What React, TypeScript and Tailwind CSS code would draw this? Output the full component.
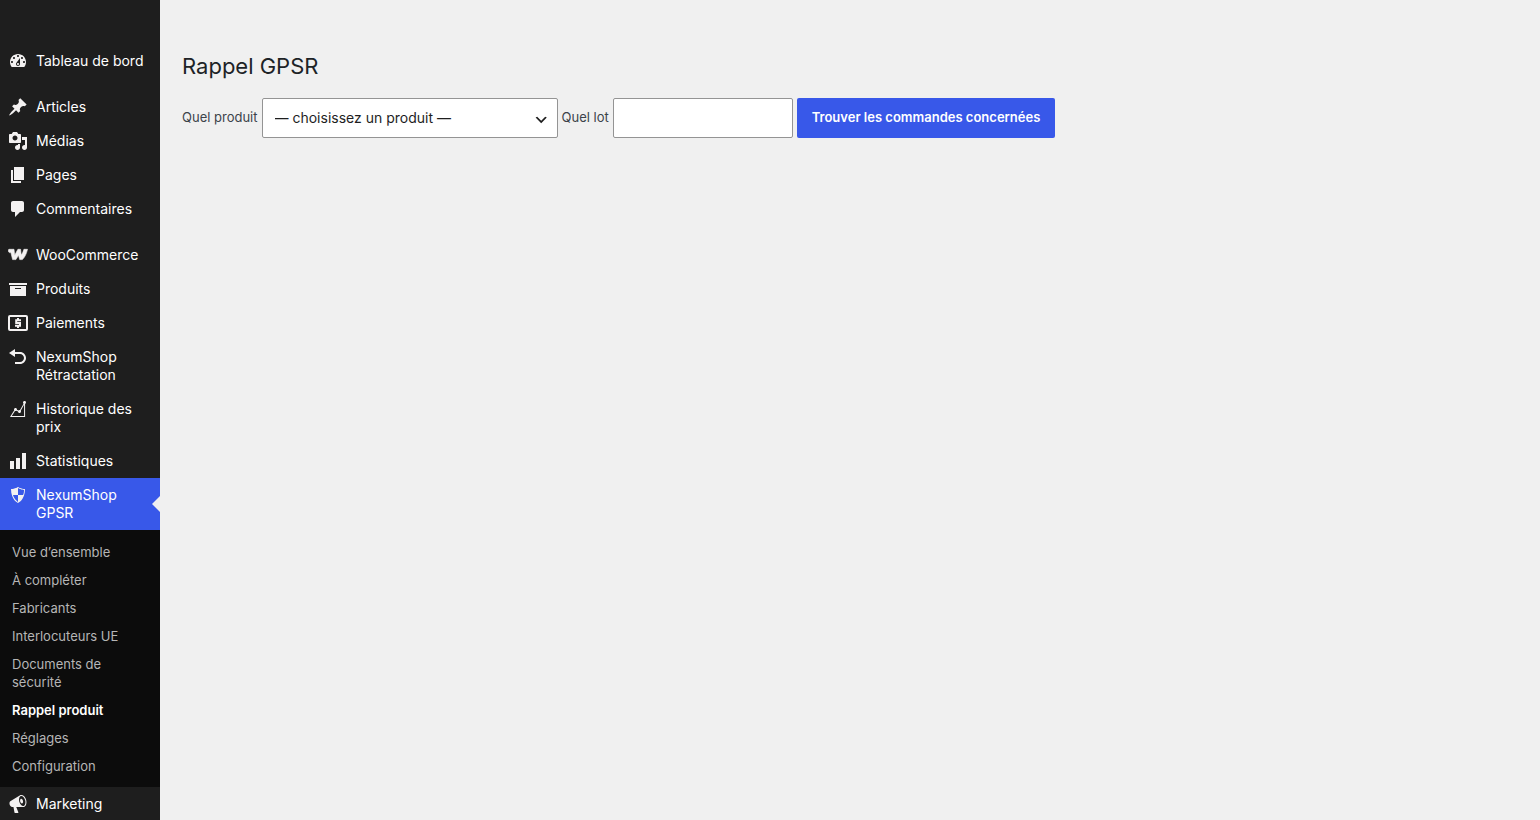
import type { ReactNode } from 'react';

const ICONS = {
  dashboard:
    'M3.76 16h12.48c1.1-1.37 1.76-3.11 1.76-5 0-4.42-3.58-8-8-8s-8 3.58-8 8c0 1.89.66 3.63 1.76 5zM10 4c.55 0 1 .45 1 1s-.45 1-1 1-1-.45-1-1 .45-1 1-1zM6 6c.55 0 1 .45 1 1s-.45 1-1 1-1-.45-1-1 .45-1 1-1zm8 0c.55 0 1 .45 1 1s-.45 1-1 1-1-.45-1-1 .45-1 1-1zm-5.37 5.55L12 7v6c0 1.1-.9 2-2 2s-2-.9-2-2c0-.57.24-1.08.63-1.45zM4 10c.55 0 1 .45 1 1s-.45 1-1 1-1-.45-1-1 .45-1 1-1zm12 0c.55 0 1 .45 1 1s-.45 1-1 1-1-.45-1-1 .45-1 1-1zm-5 3c0-.55-.45-1-1-1s-1 .45-1 1 .45 1 1 1 1-.45 1-1z',
  pin: 'M10.44 3.02l1.82-1.82 6.36 6.35-1.83 1.82c-1.05-.68-2.48-.57-3.41.36l-.75.75c-.92.93-1.04 2.35-.35 3.41l-1.83 1.82-2.41-2.41-2.8 2.79c-.42.42-3.38 2.71-3.8 2.29s1.86-3.39 2.28-3.81l2.79-2.79L4.1 9.36l1.83-1.82c1.05.69 2.48.57 3.4-.36l.75-.75c.93-.92 1.05-2.35.36-3.41z',
  media:
    'M13 11V4c0-.55-.45-1-1-1h-1.67L9 1H5L3.67 3H2c-.55 0-1 .45-1 1v7c0 .55.45 1 1 1h10c.55 0 1-.45 1-1zM7 4.5c1.38 0 2.5 1.12 2.5 2.5S8.38 9.5 7 9.5 4.5 8.38 4.5 7 5.62 4.5 7 4.5zM14 6h5v10.5c0 1.38-1.12 2.5-2.5 2.5S14 17.88 14 16.5s1.12-2.5 2.5-2.5c.17 0 .34.02.5.05V9h-3V6zm-4 8.05V13h2v3.5c0 1.38-1.12 2.5-2.5 2.5S7 17.88 7 16.5 8.12 14 9.5 14c.17 0 .34.02.5.05z',
  page: 'M6 15V2h10v13H6zm-1 1h8v2H3V5h2v11z',
  comment: 'M5 2h9c1.1 0 2 .9 2 2v7c0 1.1-.9 2-2 2h-2l-5 5v-5H5c-1.1 0-2-.9-2-2V4c0-1.1.9-2 2-2z',
  archive: 'M19 4v2H1V4h18zM2 7h16v10H2V7zm11 3V9H7v1h6z',
  undo: 'M12 5H7V2L1 6l6 4V7h5c2.2 0 4 1.8 4 4s-1.8 4-4 4H7v2h5c3.3 0 6-2.7 6-6s-2.7-6-6-6z',
  chartLine:
    'M18 3.5c0 .62-.38 1.16-.92 1.38v13.11H1.99l4.22-6.73c-.13-.23-.21-.48-.21-.76C6 9.67 6.67 9 7.5 9S9 9.67 9 10.5c0 .13-.02.25-.05.37l1.44.63c.27-.3.67-.5 1.11-.5.18 0 .35.04.51.09l3.58-6.41c-.36-.27-.59-.7-.59-1.18 0-.83.67-1.5 1.5-1.5.19 0 .36.04.53.1l.05-.09v.11c.54.22.92.76.92 1.38zm-1.92 13.49V5.85l-3.29 5.89c.13.23.21.48.21.76 0 .83-.67 1.5-1.5 1.5s-1.5-.67-1.5-1.5l.01-.07-1.63-.72c-.25.18-.55.29-.88.29-.18 0-.35-.04-.51-.1l-3.2 5.09h12.29z',
  chartBar: 'M18 18V2h-4v16h4zm-6 0V7H8v11h4zm-6 0v-8H2v8h4z',
  shield: 'M10 2s3 2 7 2c0 11-7 14-7 14S3 15 3 4c4 0 7-2 7-2zm0 8h5s1-1 1-5c0 0-5-1-6-2v7H5c1 4 5 7 5 7v-7z',
  megaphone:
    'M18.15 5.94c.46 1.62.38 3.22-.02 4.48-.42 1.28-1.26 2.18-2.3 2.48-.16.06-.26.06-.4.06-.06.02-.12.02-.18.02-.06.02-.14.02-.22.02h-6.8l2.22 5.5c.02.14-.06.26-.14.34-.08.1-.24.16-.34.16H6.95c-.1 0-.26-.06-.34-.16-.08-.08-.16-.2-.14-.34l-1-5.5H4.25l-.02-.02c-.5.06-1.08-.18-1.54-.62s-.88-1.08-1.06-1.88c-.24-.8-.2-1.56-.02-2.2.18-.62.58-1.08 1.06-1.3l.02-.02 9-5.4c.1-.06.18-.1.24-.16.06-.04.14-.08.24-.12.16-.08.28-.12.5-.18 1.04-.3 2.24.1 3.22.98s1.84 2.24 2.26 3.86zm-2.58 5.98h-.02c.4-.1.74-.34 1.04-.7.58-.7.86-1.76.86-3.04 0-.64-.1-1.3-.28-1.98-.34-1.36-1.02-2.5-1.78-3.24s-1.68-1.1-2.46-.88c-.82.22-1.4.96-1.7 2-.32 1.04-.28 2.36.06 3.72.38 1.36 1 2.5 1.8 3.24.78.74 1.62 1.1 2.48.88zm-2.54-7.08c.22-.04.42-.02.62.04.38.16.76.48 1.02 1s.42 1.2.42 1.78c0 .3-.04.56-.12.8-.18.48-.44.84-.86.94-.34.1-.8-.06-1.14-.4s-.64-.86-.78-1.5c-.18-.62-.12-1.24.02-1.72s.48-.84.82-.94z',
};

function Dashicon({ name }: { name: keyof typeof ICONS }) {
  return (
    <svg viewBox="0 0 20 20" className="size-5" fill="currentColor" fillRule="evenodd" aria-hidden="true">
      <path d={ICONS[name]} />
    </svg>
  );
}

function WooIcon() {
  return (
    <svg viewBox="0 0 20 20" className="size-5" fill="currentColor" aria-hidden="true">
      <path
        d="M1 4.300H6L6.700 10.200 9.900 4.300H12.600L13.200 10.100C14.500 8.400 15.300 6.500 15.900 4.300H19.500C18.600 8.500 16.900 12 14.400 14.600H11.700L10.500 10.300 7.900 14.600H4.600L2.900 7.600H1.600C.3 7.600 0 4.300 1 4.300Z"
        stroke="currentColor"
        strokeWidth="0.6"
        strokeLinejoin="round"
      />
    </svg>
  );
}

function PaymentsIcon() {
  return (
    <svg viewBox="0 0 20 20" className="size-5" fill="none" stroke="currentColor" aria-hidden="true">
      <rect x="1" y="3" width="18" height="14" rx="1" strokeWidth="2" />
      <path d="M13 7.300H8.200V10H12V12.700H7M10 5v1.800M10 13v2" strokeWidth="2" />
    </svg>
  );
}

interface MenuItem {
  label: string;
  icon: ReactNode;
  separated?: boolean;
  current?: boolean;
}

const MENU: MenuItem[] = [
  { label: 'Tableau de bord', icon: <Dashicon name="dashboard" /> },
  { label: 'Articles', icon: <Dashicon name="pin" />, separated: true },
  { label: 'Médias', icon: <Dashicon name="media" /> },
  { label: 'Pages', icon: <Dashicon name="page" /> },
  { label: 'Commentaires', icon: <Dashicon name="comment" /> },
  { label: 'WooCommerce', icon: <WooIcon />, separated: true },
  { label: 'Produits', icon: <Dashicon name="archive" /> },
  { label: 'Paiements', icon: <PaymentsIcon /> },
  { label: 'NexumShop Rétractation', icon: <Dashicon name="undo" /> },
  { label: 'Historique des prix', icon: <Dashicon name="chartLine" /> },
  { label: 'Statistiques', icon: <Dashicon name="chartBar" /> },
  { label: 'NexumShop GPSR', icon: <Dashicon name="shield" />, current: true },
  { label: 'Marketing', icon: <Dashicon name="megaphone" /> },
];

const SUBMENU = [
  'Vue d’ensemble',
  'À compléter',
  'Fabricants',
  'Interlocuteurs UE',
  'Documents de sécurité',
  'Rappel produit',
  'Réglages',
  'Configuration',
];

function Submenu() {
  return (
    <ul className="bg-[#0c0c0c] pt-2 pb-[7px]">
      {SUBMENU.map((label) => (
        <li key={label}>
          <a
            href="#"
            className={`block px-3 py-[5px] text-[13px] leading-[18px] ${
              label === 'Rappel produit' ? 'font-semibold text-white' : 'text-[#b6b6b6]'
            }`}
          >
            {label}
          </a>
        </li>
      ))}
    </ul>
  );
}

function Sidebar() {
  return (
    <nav className="w-40 shrink-0 bg-[#1e1e1e] pt-11" aria-label="Menu principal">
      <ul>
        {MENU.map(({ label, icon, separated, current }) => (
          <li key={label} className={separated ? 'mt-3' : ''}>
            <a
              href="#"
              className={`relative flex items-start py-2 pr-2 text-sm leading-[18px] text-white ${
                current ? 'bg-[#3858e9]' : ''
              }`}
            >
              <span className="-my-px flex w-9 shrink-0 justify-center text-[#f3f1f1]">{icon}</span>
              <span>{label}</span>
              {current && (
                <span className="absolute top-1/2 right-0 -translate-y-1/2 border-8 border-transparent border-r-[#f0f0f0]" />
              )}
            </a>
            {current && <Submenu />}
          </li>
        ))}
      </ul>
    </nav>
  );
}

export default function App() {
  return (
    <div className="flex min-h-screen bg-[#f0f0f0] font-['Inter',sans-serif]">
      <Sidebar />
      <main className="flex-1 px-[22px] pt-[51px]">
        <h1 className="text-[22px] leading-[30px] text-[#1d2327]">Rappel GPSR</h1>
        <form
          className="mt-[17px] flex flex-wrap items-center gap-1 text-[13px] text-[#3c434a]"
          onSubmit={(e) => e.preventDefault()}
        >
          <label htmlFor="product">Quel produit</label>
          <div className="relative">
            <select
              id="product"
              className="h-10 w-[296px] appearance-none rounded-xs border border-[#949494] bg-white pr-6 pl-3 text-sm text-[#1e1e1e]"
            >
              <option>— choisissez un produit —</option>
            </select>
            <svg
              viewBox="0 0 20 20"
              className="pointer-events-none absolute top-3.5 right-2 size-4"
              fill="#1e1e1e"
              aria-hidden="true"
            >
              <path d="M4 6l5 5 5-5 2 1-7 7-7-7 2-1z" />
            </svg>
          </div>
          <label htmlFor="lot">Quel lot</label>
          <input id="lot" type="text" className="h-10 w-[180px] rounded-xs border border-[#949494] bg-white px-3 text-sm" />
          <button type="submit" className="h-10 rounded-xs bg-[#3858e9] px-[15px] font-semibold text-white">
            Trouver les commandes concernées
          </button>
        </form>
      </main>
    </div>
  );
}
